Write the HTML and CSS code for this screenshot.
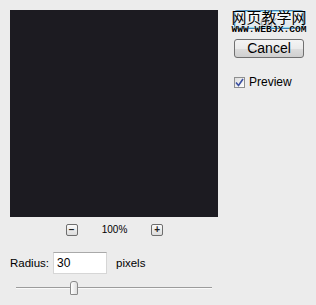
FILE: index.html
```html
<!DOCTYPE html>
<html>
<head>
<meta charset="utf-8">
<link rel="stylesheet" href="styles.css">
</head>
<body>
<div class="dialog">
  <div class="left">
    <div class="preview"></div>
    <div class="zoom-row">
      <span class="zbtn">&minus;</span>
      <span class="zoom-val">100%</span>
      <span class="zbtn">+</span>
    </div>
    <div class="radius-row">
      <span class="label">Radius:</span>
      <span class="input">30</span>
      <span class="unit">pixels</span>
    </div>
    <div class="slider">
      <div class="track"></div>
      <div class="thumb"></div>
    </div>
  </div>
  <div class="right">
    <div class="btn ok"><span class="ok-text">OK</span></div>
    <div class="btn">Cancel</div>
    <label class="check-row"><span class="check"><svg width="9" height="9" viewBox="0 0 9 9"><path d="M1 4.5 L3.5 7.5 L8 1" fill="none" stroke="#3a4fa0" stroke-width="1.6"/></svg></span>Preview</label>
    <div class="watermark">
      <div class="wm-cn">网页教学网</div>
      <div class="wm-en">WWW.WEBJX.COM</div>
    </div>
  </div>
</div>
</body>
</html>
```
FILE: styles.css
```css
html, body {
  margin: 0;
  padding: 0;
  background: #ececec;
  width: 316px;
  height: 305px;
  overflow: hidden;
  font-family: "Liberation Sans", Arial, sans-serif;
  color: #000;
}
.dialog {
  display: flex;
  padding: 10px 0 0 10px;
}
.left {
  width: 208px;
  display: flex;
  flex-direction: column;
}
.preview {
  width: 208px;
  height: 207px;
  background: #1c1b21;
}
.zoom-row {
  display: flex;
  justify-content: center;
  align-items: center;
  gap: 24px;
  margin-top: 7px;
  height: 11px;
  padding-left: 1px;
}
.zbtn {
  width: 10px;
  height: 10px;
  border: 1px solid #6e6e6e;
  border-radius: 2px;
  background: linear-gradient(#fafafa, #dcdcdc);
  font-size: 10px;
  line-height: 10px;
  text-align: center;
  font-weight: bold;
  color: #222;
}
.zoom-val {
  font-size: 10px;
  line-height: 11px;
}
.radius-row {
  display: flex;
  align-items: center;
  margin-top: 17px;
  height: 22px;
  font-size: 11.5px;
}
.label {
  width: 43px;
}
.input {
  box-sizing: border-box;
  width: 54px;
  height: 22px;
  background: #fff;
  border: 1px solid #d6d6d6;
  border-top-color: #a9a9a9;
  padding-left: 3px;
  font-size: 12px;
  line-height: 20px;
}
.unit {
  margin-left: 9px;
}
.slider {
  position: relative;
  margin-top: 7px;
  margin-left: 6px;
  width: 196px;
  height: 15px;
}
.track {
  position: absolute;
  left: 0;
  right: 0;
  top: 6px;
  height: 1px;
  background: #9c9c9c;
  border-bottom: 1px solid #fafafa;
}
.thumb {
  position: absolute;
  left: 54px;
  top: 0;
  width: 6px;
  height: 12px;
  border: 1px solid #8a8a8a;
  border-radius: 3px 3px 1px 1px;
  background: linear-gradient(90deg, #ffffff, #dedede);
}
.right {
  position: relative;
  margin-left: 16px;
  width: 70px;
  display: flex;
  flex-direction: column;
}
.btn {
  box-sizing: border-box;
  width: 70px;
  height: 19px;
  border: 1px solid #707070;
  border-radius: 3px;
  background: linear-gradient(#f4f4f4 0%, #ebebeb 50%, #dddddd 51%, #cfcfcf 100%);
  font-size: 14px;
  line-height: 17px;
  text-align: center;
  margin-bottom: 10px;
}
.btn.ok {
  border-color: #3c7fb1;
  box-shadow: inset 0 0 0 1px #8fdcf4;
  background: linear-gradient(#f3f7fa, #dde6ec);
}
.ok-text {
  color: #9a9a9a;
  font-size: 12px;
  position: relative;
  top: 3px;
}
.check-row {
  display: flex;
  align-items: center;
  margin-top: 8px;
  font-size: 12px;
  height: 12px;
}
.check {
  box-sizing: border-box;
  width: 11px;
  height: 11px;
  border: 1px solid #8e8f8f;
  background: linear-gradient(135deg, #dcdcdc, #ffffff);
  margin-right: 4px;
  display: flex;
  align-items: center;
  justify-content: center;
}
.watermark {
  position: absolute;
  left: -3px;
  top: -1px;
  width: 76px;
  text-align: center;
}
.wm-cn {
  font-family: "Noto Sans CJK SC", sans-serif;
  font-size: 15px;
  line-height: 16px;
  color: #000;
  text-shadow: 0 0 2px #fff;
}
.wm-en {
  font-family: "Liberation Mono", monospace;
  font-weight: bold;
  font-size: 9.6px;
  line-height: 8px;
  margin-top: 1px;
  color: #000;
  text-shadow: 0 0 1px #fff;
}
```
